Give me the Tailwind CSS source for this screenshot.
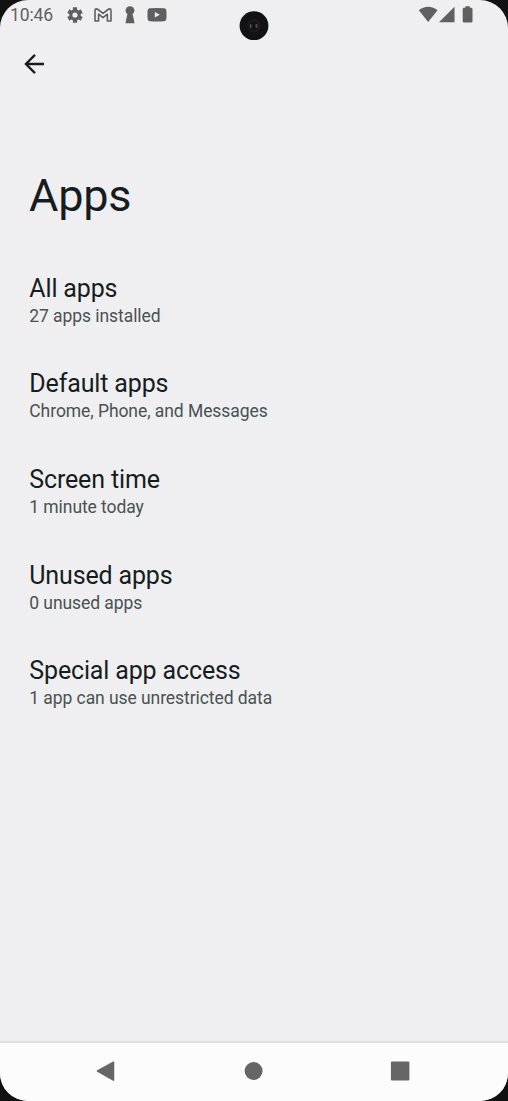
<!DOCTYPE html>
<html lang="en"><head><meta charset="utf-8"><title>Apps</title>
<script src="https://cdn.jsdelivr.net/npm/@tailwindcss/browser@4"></script></head>
<body class="bg-[#111112] font-['Roboto',sans-serif]">
<div class="relative flex h-[1101px] w-[508px] flex-col overflow-hidden rounded-[28px] bg-[#efeff1] text-[#171d1e]">
<header class="flex h-[30px] items-center pl-[10px] pr-[34px] text-[#5f5f60]">
<span class="w-[57px] text-[17.5px] leading-[30px] tracking-[-0.1px]">10:46</span>
<svg class="h-[16px] w-[16px]" viewBox="0 0 16 16" fill="none" stroke="currentColor"><circle cx="8" cy="8" r="4.200" stroke-width="3.200"/><path stroke-width="4.200" d="M8 .3v2.700M8 13v2.700M1.330 4.150L3.670 5.500M12.330 10.500L14.670 11.850M14.670 4.150L12.330 5.500M3.670 10.500L1.330 11.850"/></svg>
<svg class="ml-[11px] h-[14px] w-[18px]" viewBox="0 0 18 14" fill="none" stroke="currentColor" stroke-width="1.600" stroke-linejoin="round"><path d="M1 2.500Q1 .9 2.500.9 3.200.9 4 1.500L9 5.400 14 1.500Q14.800.9 15.500.9 17 .9 17 2.500V13H13.400V6.200L9 9.600 4.600 6.200V13H1z"/></svg>
<svg class="ml-[13px] h-[18px] w-[10px]" viewBox="0 0 10 18" fill="currentColor"><path d="M5 .2A4.300 4.300 0 0 0 2.400 8L.4 17.200h9.200L7.600 8A4.300 4.300 0 0 0 5 .2z"/></svg>
<svg class="ml-[12px] h-[14px] w-[20px]" viewBox="0 0 20 14" fill="currentColor"><path fill-rule="evenodd" d="M3 .3Q10-.2 17 .3 19.500.5 19.500 3.800V9.800Q19.500 13.100 17 13.300 10 13.800 3 13.300.5 13.100.5 9.800V3.800Q.5.500 3 .3zM7.800 4v5.600l5-2.800z"/></svg>
<svg class="ml-auto h-[18px] w-[56px]" viewBox="0 0 56 18" fill="currentColor"><path d="M.8 4.300C6-.6 14.300-.6 19.500 4.300L10.200 16.100z"/><path d="M36.500 .8v15.400H21z"/><path d="M47.400 .3h4.400v1.500h1.400q1.300 0 1.300 1.300v12.200q0 1.300-1.300 1.300H46q-1.300 0-1.300-1.300V3.100q0-1.300 1.300-1.300h1.400z"/></svg>
</header>
<svg class="absolute left-[239px] top-[11px] h-[30px] w-[30px]" viewBox="0 0 30 30"><circle cx="15" cy="14.700" r="14.400" fill="#111213"/><circle cx="15" cy="14.700" r="7" fill="#1b1a1b"/><circle cx="15" cy="14.700" r="4" fill="#121112"/><rect x="11" y="13" width="1.500" height="4" rx=".7" fill="#57603e"/><rect x="16.500" y="13" width="2" height="4" rx=".7" fill="#733e35"/></svg>
<div class="flex h-[67px] items-center px-[24px]"><svg class="h-[20px] w-[21px]" viewBox="0 0 21 20" fill="none" stroke="#1c1a1b" stroke-width="2.300"><path d="M20 10H2M11 .9L1.900 10 11 19.100"/></svg></div>
<h1 class="mt-[69px] px-[29px] text-[45px] leading-[60px] tracking-[-0.2px]">Apps</h1>
<main class="mt-[46.500px] flex flex-col px-[29.300px] [&_h2]:text-[25px] [&_h2]:leading-[32px] [&_h2]:tracking-[-0.150px] [&_p]:text-[17.500px] [&_p]:leading-[23px] [&_p]:tracking-[-0.070px] [&_p]:text-[#4a5152] [&_section]:h-[95.700px]">
<section><h2>All apps</h2><p>27 apps installed</p></section>
<section><h2>Default apps</h2><p>Chrome, Phone, and Messages</p></section>
<section><h2>Screen time</h2><p>1 minute today</p></section>
<section><h2>Unused apps</h2><p>0 unused apps</p></section>
<section><h2>Special app access</h2><p>1 app can use unrestricted data</p></section>
</main>
<nav class="mt-auto flex h-[60px] items-center border-t-2 border-[#dfdfe0] bg-[#fcfcfc] pl-[96px] text-[#666]">
<svg class="h-[22px] w-[20px]" viewBox="0 0 20 22" fill="currentColor" stroke="currentColor" stroke-width="1.500" stroke-linejoin="round"><path d="M1.500 10L17.500 1.200V19.200z"/></svg>
<svg class="ml-[127px] h-[22px] w-[22px]" viewBox="0 0 22 22" fill="currentColor"><circle cx="10.600" cy="10" r="9"/></svg>
<svg class="ml-[125px] h-[22px] w-[22px]" viewBox="0 0 22 22" fill="currentColor"><rect x=".9" y=".5" width="18.500" height="19" rx="1.200"/></svg>
</nav>
</div></body></html>
